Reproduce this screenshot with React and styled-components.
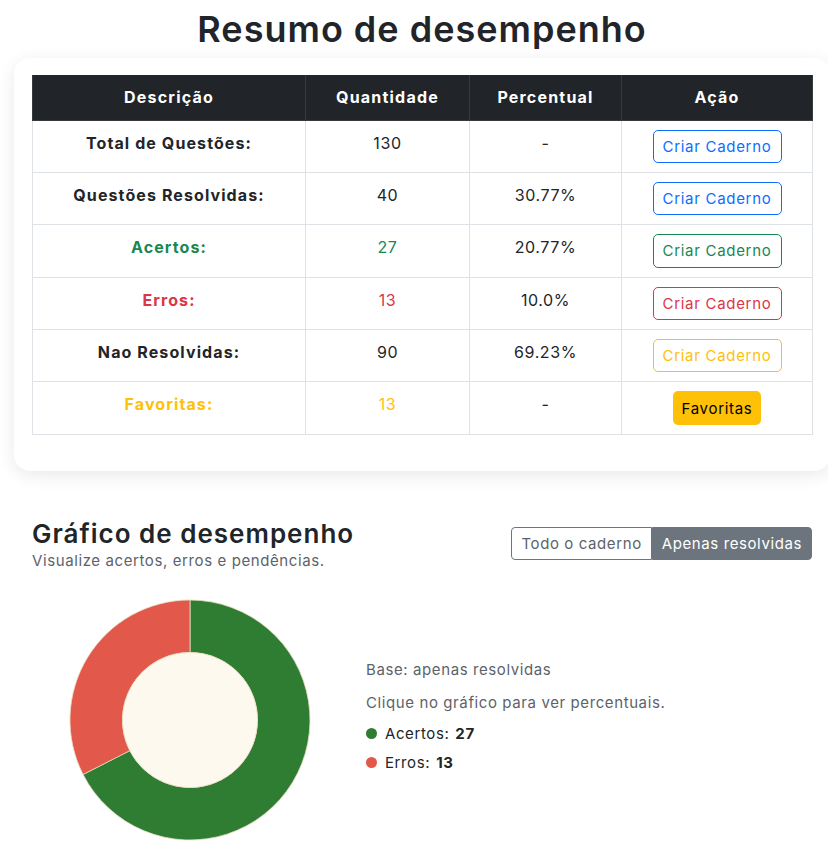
import React from "react";
import styled, { createGlobalStyle } from "styled-components";

const GlobalStyle = createGlobalStyle`
  * { box-sizing: border-box; }
  html, body { margin: 0; padding: 0; background: #ffffff; overflow: hidden; }
  body { font-family: "Inter", "Open Sans", sans-serif; color: #212529; letter-spacing: 0.6px; }
`;

const Page = styled.div`
  width: 816px;
  margin-left: 14px;
  padding-top: 5px;
`;

const Title = styled.h1`
  margin: 0 0 5px;
  text-align: center;
  font-size: 36px;
  line-height: 48px;
  font-weight: 600;
  color: #212529;
  letter-spacing: 1px;
`;

const Card = styled.div`
  background: #fff;
  border-radius: 16px;
  box-shadow: 0 4px 18px rgba(0, 0, 0, 0.09);
  padding: 17px 18px 36px;
`;

const Table = styled.table`
  width: 780px;
  border-collapse: collapse;
  table-layout: fixed;
  font-size: 16px;
`;

const Th = styled.th`
  background: #212529;
  color: #fff;
  font-weight: 700;
  height: 45px;
  padding: 0 8px;
  text-align: center;
  letter-spacing: 1.2px;
  border: 1px solid #373b3e;
  border-top: none;
`;

const Td = styled.td`
  text-align: center;
  vertical-align: top;
  padding: 9px 8px 9px;
  line-height: 24px;
  border: 1px solid #dee2e6;
  color: ${(p) => p.$color || "#212529"};
  font-weight: ${(p) => (p.$bold ? 700 : 400)};
  letter-spacing: ${(p) => (p.$bold ? "1.1px" : "0.6px")};
`;

const LabelCell = styled(Td)`
  padding-top: 10px;
`;

const NumCell = styled(Td)`
  padding-top: 10px;
`;

const OutlineButton = styled.button`
  font-family: inherit;
  font-size: 15px;
  letter-spacing: 0.7px;
  height: 33.4px;
  width: 129px;
  background: transparent;
  color: ${(p) => p.$color};
  border: 1px solid ${(p) => p.$color};
  border-radius: 5px;
  padding: 0;
  cursor: pointer;
`;

const FillButton = styled.button`
  font-family: inherit;
  font-size: 15px;
  letter-spacing: 0.7px;
  height: 33.4px;
  padding: 0 9px;
  background: #ffc107;
  color: #000;
  border: none;
  border-radius: 5px;
  cursor: pointer;
`;

const Section = styled.div`
  padding: 47px 18px 0;
`;

const SectionHead = styled.div`
  display: flex;
  justify-content: space-between;
  align-items: flex-start;
`;

const HeadText = styled.div`
  display: flex;
  flex-direction: column;
`;

const SectionTitle = styled.h2`
  margin: 0;
  font-size: 26px;
  line-height: 32px;
  font-weight: 600;
  letter-spacing: 1px;
  color: #212529;
`;

const Subtitle = styled.div`
  font-size: 15px;
  line-height: 20px;
  color: #5c636a;
  margin-top: 1px;
`;

const Group = styled.div`
  display: flex;
  margin-top: 9px;
`;

const GroupButton = styled.button`
  font-family: inherit;
  font-size: 15px;
  letter-spacing: 0.6px;
  height: 33px;
  padding: 0 9px;
  border: 1px solid #6c757d;
  background: ${(p) => (p.$active ? "#6c757d" : "#fff")};
  color: ${(p) => (p.$active ? "#fff" : "#5c636a")};
  border-radius: ${(p) => (p.$first ? "4px 0 0 4px" : "0 4px 4px 0")};
  cursor: pointer;
`;

const ChartRow = styled.div`
  display: flex;
  align-items: flex-start;
  margin-top: 28px;
`;

const ChartBox = styled.div`
  width: 334px;
  padding-left: 37px;
  flex-shrink: 0;
`;

const Legend = styled.div`
  padding-top: 60px;
  display: flex;
  flex-direction: column;
  gap: 9px;
  font-size: 15px;
  line-height: 22px;
`;

const Note = styled.div`
  color: #5c636a;
  margin-bottom: 2px;
`;

const LegendItem = styled.div`
  display: flex;
  align-items: center;
  color: #212529;
  gap: 8px;
  margin-top: -2px;
  margin-bottom: 0;
`;

const Dot = styled.span`
  width: 11px;
  height: 11px;
  border-radius: 50%;
  background: ${(p) => p.$color};
  display: inline-block;
`;

const Value = styled.b`
  font-weight: 700;
  margin-left: 6px;
`;

const rows = [
  { label: "Total de Questões:", qty: "130", pct: "-", btn: "#0d6efd" },
  { label: "Questões Resolvidas:", qty: "40", pct: "30.77%", btn: "#0d6efd" },
  { label: "Acertos:", qty: "27", pct: "20.77%", btn: "#198754", color: "#198754" },
  { label: "Erros:", qty: "13", pct: "10.0%", btn: "#dc3545", color: "#dc3545" },
  { label: "Nao Resolvidas:", qty: "90", pct: "69.23%", btn: "#ffc107" },
  { label: "Favoritas:", qty: "13", pct: "-", fav: true, color: "#ffc107" },
];

function Donut() {
  const cx = 120, cy = 120, R = 120, r = 67.5;
  const frac = 27 / 40;
  const a = frac * 2 * Math.PI;
  const pt = (rad, ang) => [cx + rad * Math.sin(ang), cy - rad * Math.cos(ang)];
  const [x1, y1] = pt(R, a);
  const [x2, y2] = pt(r, a);
  const green = `M ${cx} ${cy - R} A ${R} ${R} 0 1 1 ${x1} ${y1} L ${x2} ${y2} A ${r} ${r} 0 1 0 ${cx} ${cy - r} Z`;
  const red = `M ${x1} ${y1} A ${R} ${R} 0 0 1 ${cx} ${cy - R} L ${cx} ${cy - r} A ${r} ${r} 0 0 0 ${x2} ${y2} Z`;
  return (
    <svg width="242" height="242" viewBox="-1 -1 242 242">
      <path d={green} fill="#2e7d32" stroke="#e9dcc0" strokeWidth="0.8" />
      <path d={red} fill="#e2584a" stroke="#e9dcc0" strokeWidth="0.8" />
      <circle cx={cx} cy={cy} r={r} fill="#fef9ee" stroke="#e9dcc0" strokeWidth="0.8" />
    </svg>
  );
}

export default function App() {
  return (
    <>
      <GlobalStyle />
      <Page>
        <Title>Resumo de desempenho</Title>
        <Card>
          <Table>
            <colgroup>
              <col style={{ width: 273 }} />
              <col style={{ width: 164 }} />
              <col style={{ width: 152 }} />
              <col style={{ width: 191 }} />
            </colgroup>
            <thead>
              <tr>
                <Th>Descrição</Th>
                <Th>Quantidade</Th>
                <Th>Percentual</Th>
                <Th>Ação</Th>
              </tr>
            </thead>
            <tbody>
              {rows.map((r) => (
                <tr key={r.label}>
                  <LabelCell $bold $color={r.color}>{r.label}</LabelCell>
                  <NumCell $color={r.color}>{r.qty}</NumCell>
                  <NumCell>{r.pct}</NumCell>
                  <Td>
                    {r.fav ? (
                      <FillButton>Favoritas</FillButton>
                    ) : (
                      <OutlineButton $color={r.btn}>Criar Caderno</OutlineButton>
                    )}
                  </Td>
                </tr>
              ))}
            </tbody>
          </Table>
        </Card>
        <Section>
          <SectionHead>
            <HeadText>
              <SectionTitle>Gráfico de desempenho</SectionTitle>
              <Subtitle>Visualize acertos, erros e pendências.</Subtitle>
            </HeadText>
            <Group>
              <GroupButton $first>Todo o caderno</GroupButton>
              <GroupButton $active>Apenas resolvidas</GroupButton>
            </Group>
          </SectionHead>
          <ChartRow>
            <ChartBox>
              <Donut />
            </ChartBox>
            <Legend>
              <Note>Base: apenas resolvidas</Note>
              <Note>Clique no gráfico para ver percentuais.</Note>
              <LegendItem>
                <Dot $color="#2e7d32" />
                <span>Acertos:<Value>27</Value></span>
              </LegendItem>
              <LegendItem>
                <Dot $color="#e2584a" />
                <span>Erros:<Value>13</Value></span>
              </LegendItem>
            </Legend>
          </ChartRow>
        </Section>
      </Page>
    </>
  );
}
